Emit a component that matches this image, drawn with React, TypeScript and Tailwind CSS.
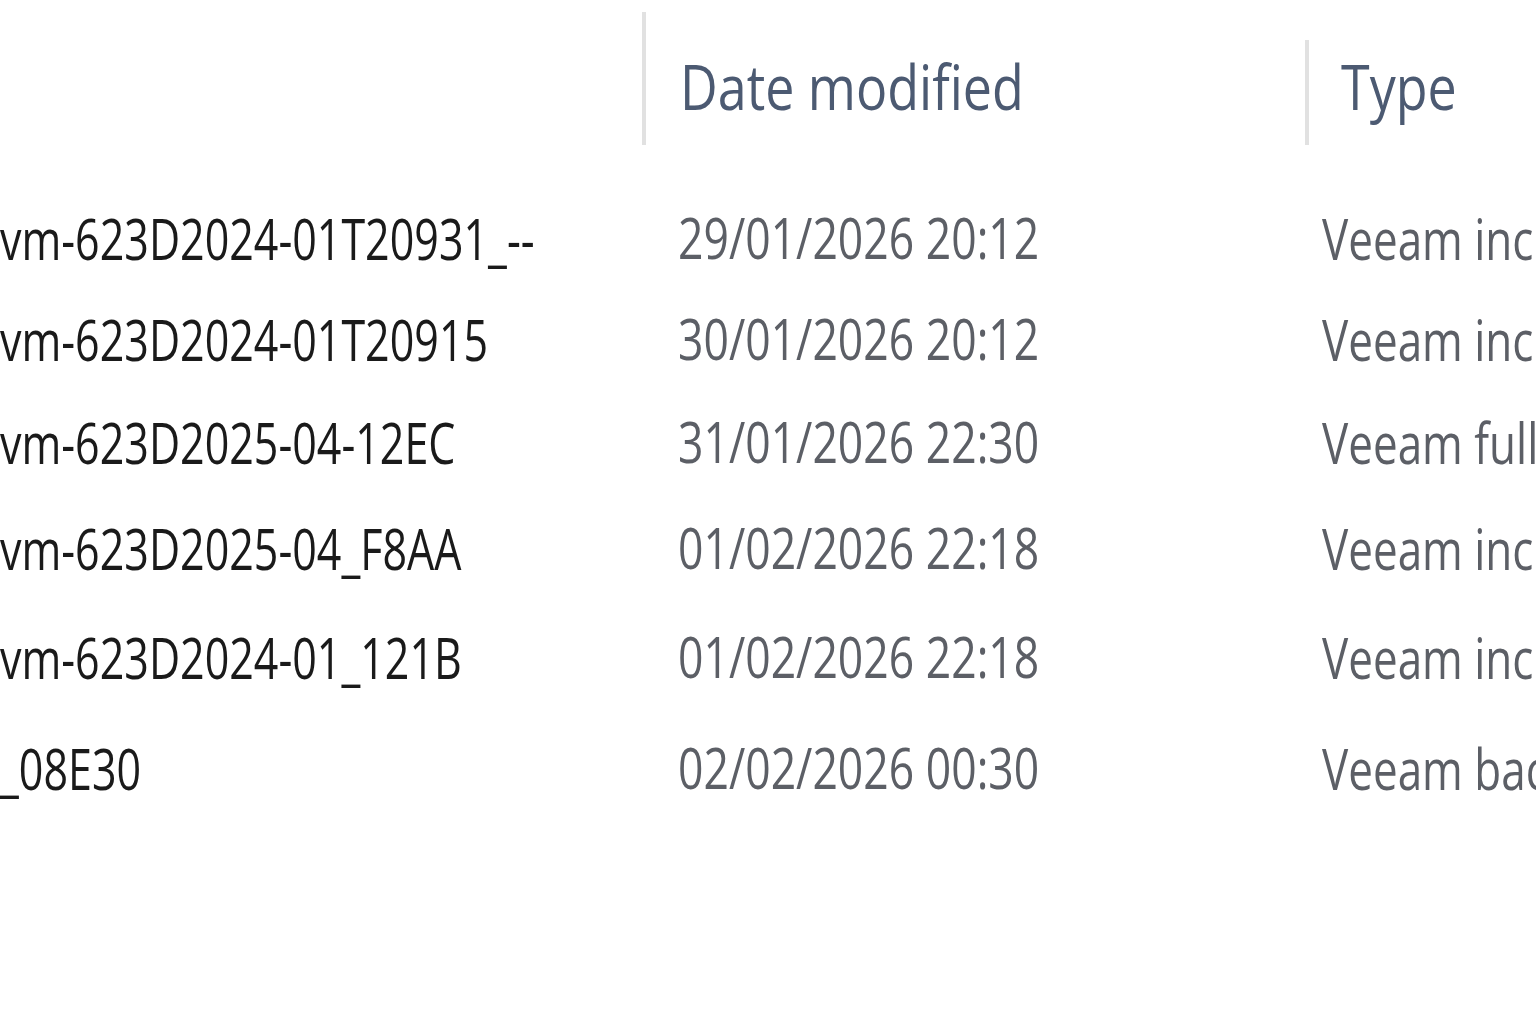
import React from 'react';

interface FileRow {
  name: string;
  modified: string;
  type: string;
  height: string;
}

// row heights are uneven in the capture, keep them as measured
const rows: FileRow[] = [
  { name: 'vm-623D2024-01T20931_--', modified: '29/01/2026 20:12', type: 'Veeam incremental backup', height: 'h-[100px]' },
  { name: 'vm-623D2024-01T20915', modified: '30/01/2026 20:12', type: 'Veeam incremental backup', height: 'h-[102px]' },
  { name: 'vm-623D2025-04-12EC', modified: '31/01/2026 22:30', type: 'Veeam full backup', height: 'h-[104px]' },
  { name: 'vm-623D2025-04_F8AA', modified: '01/02/2026 22:18', type: 'Veeam incremental backup', height: 'h-[108px]' },
  { name: 'vm-623D2024-01_121B', modified: '01/02/2026 22:18', type: 'Veeam incremental backup', height: 'h-[110px]' },
  { name: '_08E30', modified: '02/02/2026 00:30', type: 'Veeam backup metadata', height: 'h-[112px]' },
];

export default function App() {
  return (
    <div className="w-[1536px] h-[1024px] overflow-hidden bg-white font-['Open_Sans','Noto_Sans',sans-serif]">
      {/* Column headers */}
      <div className="flex h-[145px]">
        <div className="w-[642px] shrink-0" />
        <div className="w-[4px] h-[133px] mt-[12px] shrink-0 bg-[#e1e1e1]" />
        <div className="w-[659px] shrink-0 flex items-center pt-[26px] pl-[34px]">
          <span className="block text-[52px] leading-none font-medium text-[#4c5a72] whitespace-nowrap scale-y-[1.2]">
            Date modified
          </span>
        </div>
        <div className="w-[4px] h-[105px] mt-[40px] shrink-0 bg-[#e1e1e1]" />
        <div className="flex-1 flex items-center pt-[26px] pl-[32px]">
          <span className="block text-[52px] leading-none font-medium text-[#4c5a72] whitespace-nowrap scale-y-[1.2]">
            Type
          </span>
        </div>
      </div>

      {/* File rows */}
      <div className="pt-[43px]">
        {rows.map((row, i) => (
          <div key={i} className={`flex items-center ${row.height}`}>
            <div className="w-[678px] shrink-0">
              <span className="block text-[43px] leading-none font-medium text-[#1a1a1a] whitespace-nowrap scale-y-[1.3]">
                {row.name}
              </span>
            </div>
            <div className="w-[644px] shrink-0">
              <span className="block text-[44.5px] leading-none font-medium text-[#5c5f66] whitespace-nowrap scale-y-[1.26]">
                {row.modified}
              </span>
            </div>
            <div className="flex-1 min-w-0">
              <span className="block text-[44px] leading-none font-medium text-[#5c5f66] whitespace-nowrap scale-y-[1.27]">
                {row.type}
              </span>
            </div>
          </div>
        ))}
      </div>
    </div>
  );
}
